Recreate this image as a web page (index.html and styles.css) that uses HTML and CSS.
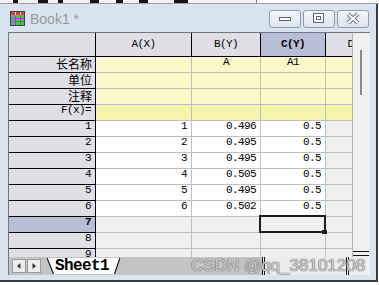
FILE: index.html
```html
<!DOCTYPE html>
<html>

<head lang="zh">
    <meta charset="UTF-8">
    <title>Book1</title>
    <link rel="stylesheet" href="styles.css">
</head>

<body>
    <!-- 上面那个窗口露出来的一条 -->
    <div class="toolstrip">
        <span class="bit b1"></span>
        <span class="bit b2"></span>
        <span class="bit b3"></span>
        <span class="bit b4"></span>
        <span class="bit b5"></span>
        <span class="bit b6"></span>
        <span class="bit b7"></span>
        <span class="strip-input"></span>
    </div>

    <div class="book">
        <div class="book-title">
            <svg class="book-icon" width="15" height="15" viewBox="0 0 15 15">
                <rect x="0.5" y="0.5" width="14" height="14" fill="#3fcf3f" stroke="#404040" />
                <rect x="1" y="1" width="13" height="3" fill="#e83a3a" />
                <path d="M5.5 1v3M10.5 1v3" stroke="#ffffff" />
                <path d="M5.5 4v10M10.5 4v10M1 7.5h13M1 10.5h13" stroke="#b030d0" />
                <rect x="1" y="4" width="4" height="10" fill="#6f8fe0" opacity="0.5" />
            </svg>
            <span class="book-name">Book1 *</span>
            <div class="win-btns">
                <a class="win-btn" href="javascript:;">
                    <svg width="30" height="16" viewBox="0 0 30 16">
                        <rect x="9.5" y="6.5" width="11" height="3" fill="#ffffff" stroke="#5d6674" />
                    </svg>
                </a>
                <a class="win-btn" href="javascript:;">
                    <svg width="30" height="16" viewBox="0 0 30 16">
                        <rect x="9.5" y="2.5" width="10" height="9" fill="#ffffff" stroke="#5d6674" />
                        <rect x="12.5" y="5.5" width="4" height="3" fill="none" stroke="#5d6674" />
                    </svg>
                </a>
                <a class="win-btn" href="javascript:;">
                    <svg width="30" height="16" viewBox="0 0 30 16">
                        <path d="M10 3l10 9M20 3l-10 9" stroke="#6c7684" stroke-width="4" />
                        <path d="M10 3l10 9M20 3l-10 9" stroke="#ffffff" stroke-width="2" />
                    </svg>
                </a>
            </div>
        </div>

        <div class="book-client">
            <div class="sheet-area">
                <div class="sheet">
                    <div class="c hd"></div>
                    <div class="c hd">A(X)</div>
                    <div class="c hd">B(Y)</div>
                    <div class="c hd sel">C(Y)</div>
                    <div class="c hd">D(Y)</div>

                    <div class="c rh cjk">长名称</div>
                    <div class="c lb"></div>
                    <div class="c lb">A</div>
                    <div class="c lb">A1</div>
                    <div class="c lb"></div>

                    <div class="c rh cjk">单位</div>
                    <div class="c lb"></div>
                    <div class="c lb"></div>
                    <div class="c lb"></div>
                    <div class="c lb"></div>

                    <div class="c rh cjk">注释</div>
                    <div class="c lb"></div>
                    <div class="c lb"></div>
                    <div class="c lb"></div>
                    <div class="c lb"></div>

                    <div class="c rh">F(x)=</div>
                    <div class="c lb fx"></div>
                    <div class="c lb fx"></div>
                    <div class="c lb fx"></div>
                    <div class="c lb fx"></div>

                    <div class="c rh">1</div>
                    <div class="c">1</div>
                    <div class="c">0.496</div>
                    <div class="c">0.5</div>
                    <div class="c em"></div>

                    <div class="c rh">2</div>
                    <div class="c">2</div>
                    <div class="c">0.495</div>
                    <div class="c">0.5</div>
                    <div class="c em"></div>

                    <div class="c rh">3</div>
                    <div class="c">3</div>
                    <div class="c">0.495</div>
                    <div class="c">0.5</div>
                    <div class="c em"></div>

                    <div class="c rh">4</div>
                    <div class="c">4</div>
                    <div class="c">0.505</div>
                    <div class="c">0.5</div>
                    <div class="c em"></div>

                    <div class="c rh">5</div>
                    <div class="c">5</div>
                    <div class="c">0.495</div>
                    <div class="c">0.5</div>
                    <div class="c em"></div>

                    <div class="c rh">6</div>
                    <div class="c">6</div>
                    <div class="c">0.502</div>
                    <div class="c">0.5</div>
                    <div class="c em"></div>

                    <div class="c rh sel">7</div>
                    <div class="c em"></div>
                    <div class="c em"></div>
                    <div class="c em act"></div>
                    <div class="c em"></div>

                    <div class="c rh">8</div>
                    <div class="c em"></div>
                    <div class="c em"></div>
                    <div class="c em"></div>
                    <div class="c em"></div>

                    <div class="c rh">9</div>
                    <div class="c em"></div>
                    <div class="c em"></div>
                    <div class="c em"></div>
                    <div class="c em"></div>
                </div>
                <div class="vscroll">
                    <span class="vthumb"></span>
                    <span class="vsplit"></span>
                </div>
            </div>

            <div class="tabbar">
                <div class="tabs">
                    <a class="nav-btn" href="javascript:;">
                        <svg width="12" height="12" viewBox="0 0 12 12"><path d="M7.5 3v6L4 6z" fill="#3a3a3a" /></svg>
                    </a>
                    <a class="nav-btn" href="javascript:;">
                        <svg width="12" height="12" viewBox="0 0 12 12"><path d="M4.5 3v6L8 6z" fill="#3a3a3a" /></svg>
                    </a>
                    <div class="sheet-tab">
                        <svg class="tab-shape" width="75" height="16" viewBox="0 0 75 16">
                            <path d="M0 0h75l-6 16H7z" fill="#ffffff" />
                            <path d="M1 0l6.5 16M74 0l-5.5 16" stroke="#111111" stroke-width="1.2" fill="none" />
                        </svg>
                        <span class="tab-name">Sheet1</span>
                    </div>
                </div>
                <div class="hscroll"></div>
                <div class="corner"></div>
            </div>
        </div>
    </div>

    <div class="watermark">CSDN @qq_38101208</div>
</body>

</html>
```

FILE: styles.css
```css
body {
    margin: 0px;
    width: 379px;
    height: 285px;
    overflow: hidden;
    position: relative;
    background: #ffffff;
    font-family: "Liberation Mono", "Noto Sans CJK SC", monospace;
}

a {
    text-decoration: none;
    color: #000000;
}

/* 顶上一条 */
.toolstrip {
    display: flex;
    height: 3px;
    background: #f4f4f4;
    border-bottom: 1px solid #9c9c9c;
}

.toolstrip .bit {
    height: 3px;
    background: #151515;
}

.b1 { margin-left: 13px; width: 5px; }
.b2 { margin-left: 20px; width: 10px; }
.b3 { margin-left: 10px; width: 5px; }
.b4 { margin-left: 27px; width: 9px; }
.b5 { margin-left: 17px; width: 7px; }
.b6 { margin-left: 16px; width: 9px; }
.b7 { margin-left: 26px; width: 14px; }

.strip-input {
    margin-left: 68px;
    width: 112px;
    height: 3px;
    background: #ffffff;
    border-left: 1px solid #7a7a7a;
}

/* 窗口 */
.book {
    width: 376px;
    padding-bottom: 5px;
    background: #d9e4f1;
    border-right: 2px solid #3d3d3d;
    border-bottom: 2px solid #3d3d3d;
}

.book-title {
    display: flex;
    align-items: center;
    height: 28px;
    padding: 0px 7px 0px 10px;
}

.book-icon {
    display: block;
}

.book-name {
    margin-left: 5px;
    margin-top: 1px;
    font-family: "Liberation Sans", sans-serif;
    font-size: 14px;
    color: #9a9a9a;
}

.win-btns {
    display: flex;
    gap: 2px;
    margin-left: auto;
    margin-top: 1px;
}

.win-btn {
    display: flex;
    align-items: center;
    justify-content: center;
    width: 32px;
    height: 18px;
    box-sizing: border-box;
    border: 1px solid #8d9cb0;
    border-radius: 3px;
    background: linear-gradient(#f3f6fa, #dde5ef);
}

.win-btn svg {
    display: block;
}

.book-client {
    margin: 0px 6px 0px 8px;
    border-top: 1px solid #6f7885;
    border-left: 1px solid #6f7885;
}

.sheet-area {
    display: flex;
    height: 224px;
}

/* 表格 */
.sheet {
    width: 343px;
    overflow: hidden;
    display: grid;
    grid-template-columns: 87px 96px 69px 65px 68px;
    grid-template-rows: 24px;
    grid-auto-rows: 16px;
    align-content: start;
}

.c {
    box-sizing: border-box;
    border-right: 1px solid #c0c0c0;
    border-bottom: 1px solid #c0c0c0;
    padding: 0px 4px;
    background: #ffffff;
    font-size: 11px;
    line-height: 11px;
    letter-spacing: -0.6px;
    text-align: right;
    white-space: nowrap;
    color: #000000;
}

.hd {
    background: #dfdfe5;
    border-right-color: #000000;
    border-bottom-color: #000000;
    text-align: center;
    line-height: 23px;
}

.rh {
    background: #dfdfe5;
    border-right-color: #000000;
    border-bottom-color: #000000;
}

.cjk {
    font-family: "Noto Sans CJK SC", sans-serif;
    font-size: 12px;
    line-height: 13px;
    letter-spacing: 0px;
    padding-right: 3px;
}

.lb {
    background: #fbf9c9;
    text-align: center;
}

.fx {
    background: #f7f4ab;
}

.em {
    background: #f0f0f0;
}

.sel {
    background: #b7bed6;
    font-weight: bold;
}

.act {
    position: relative;
}

/* 当前单元格的粗框 */
.act::before {
    content: "";
    position: absolute;
    left: -2px;
    top: -2px;
    right: -1px;
    bottom: -1px;
    border: 2px solid #1c1c1c;
    z-index: 1;
}

.act::after {
    content: "";
    position: absolute;
    right: -2px;
    bottom: -2px;
    width: 5px;
    height: 4px;
    background: #1c1c1c;
    z-index: 2;
}

/* 竖滚动条 */
.vscroll {
    display: flex;
    flex-direction: column;
    width: 18px;
    box-sizing: border-box;
    border-left: 1px solid #b4b4b4;
    background: #f0f0f0;
}

.vthumb {
    margin: 17px 0px 0px 7px;
    width: 2px;
    height: 45px;
    background: #8a8a8a;
}

.vsplit {
    margin-top: auto;
    margin-bottom: 1px;
    width: 16px;
    height: 3px;
    border-top: 1px solid #111111;
    border-bottom: 1px solid #111111;
}

/* 底下的标签栏 */
.tabbar {
    display: flex;
    height: 18px;
}

.tabs {
    display: flex;
    align-items: center;
    width: 253px;
    padding-left: 3px;
    box-sizing: border-box;
    background: #c4c4c4;
}

.nav-btn {
    display: flex;
    align-items: center;
    justify-content: center;
    width: 14px;
    height: 14px;
    box-sizing: border-box;
    margin-right: 1px;
    border: 1px solid #9a9a9a;
    background: #ececec;
}

.sheet-tab {
    position: relative;
    align-self: flex-start;
    margin: 1px 0px 0px 4px;
    width: 75px;
    height: 16px;
}

.tab-shape {
    position: absolute;
    left: 0px;
    top: 0px;
}

.tab-name {
    position: relative;
    display: block;
    padding-left: 9px;
    font-size: 16px;
    line-height: 17px;
    font-weight: bold;
    letter-spacing: -0.6px;
}

.hscroll {
    width: 87px;
    box-sizing: border-box;
    border-left: 3px double #1a1a1a;
    border-right: 3px double #1a1a1a;
    background: #ececec;
}

.corner {
    flex: 1;
    background: #f0f0f0;
}

/* 水印 */
.watermark {
    position: absolute;
    left: 191px;
    top: 256px;
    font-family: "Liberation Sans", sans-serif;
    font-size: 17px;
    line-height: 20px;
    color: #cdcdcd;
    text-shadow: 0 0 1px #5a5a5a, 0 0 1px #5a5a5a;
    white-space: nowrap;
}
```
